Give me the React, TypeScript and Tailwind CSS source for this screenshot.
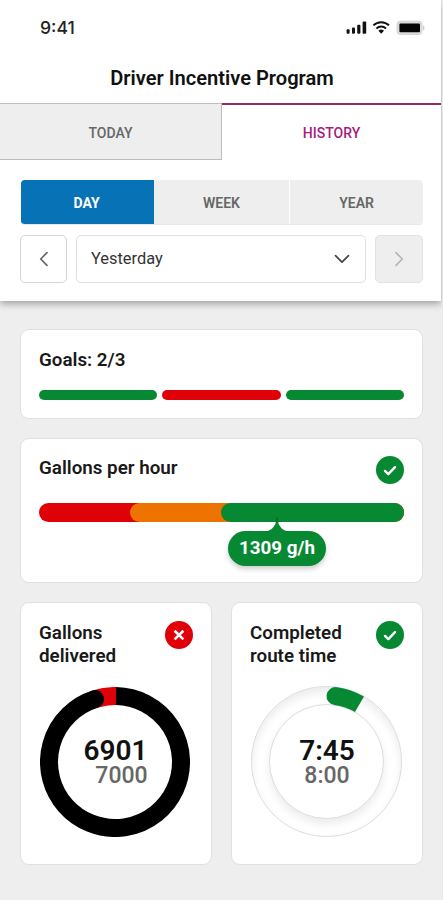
import React from "react";

function StatusIcons() {
  return (
    <svg width="80" height="16" viewBox="0 0 80 16" className="block">
      <g fill="#111">
        <rect x="0.6" y="9.3" width="3" height="4.4" rx="1" />
        <rect x="6" y="7.6" width="3" height="6.1" rx="1" />
        <rect x="11.2" y="4.8" width="3.2" height="8.9" rx="1" />
        <rect x="16.6" y="1.6" width="3.6" height="12.1" rx="1" />
      </g>
      <g fill="none" stroke="#111" strokeWidth="2">
        <path d="M27.4 5.4a11 11 0 0 1 15.6 0" />
        <path d="M30.4 8.6a6.8 6.8 0 0 1 9.6 0" />
      </g>
      <path d="M32.4 10.8a4 4 0 0 1 5.6 0L35.2 13.8z" fill="#111" />
      <rect x="51" y="1.2" width="25" height="13.2" rx="3.4" fill="#ddd" stroke="#d2d2d2" />
      <path d="M77 5.2c1.9.7 1.9 4.4 0 5.2z" fill="#ccc" />
      <rect x="53.4" y="3.6" width="20.6" height="8.6" rx="1" fill="#050505" />
    </svg>
  );
}

function Badge({ ok }: { ok: boolean }) {
  return (
    <svg width="28" height="28" viewBox="0 0 28 28" className="block shrink-0">
      <circle cx="14" cy="14" r="14" fill={ok ? "#078832" : "#df0008"} />
      <path
        d={ok ? "M9 14.9l3.3 3.2 6.7-6.9" : "M9.6 9.8l8.8 8.6M18.4 9.8l-8.8 8.6"}
        fill="none"
        stroke="#fff"
        strokeWidth={ok ? 2.4 : 2.6}
        strokeLinecap={ok ? "round" : "butt"}
        strokeLinejoin="round"
      />
    </svg>
  );
}

function Chevron({ d, w, h, color }: { d: string; w: number; h: number; color: string }) {
  return (
    <svg width={w} height={h} viewBox={`0 0 ${w} ${h}`} className="block">
      <path d={d} fill="none" stroke={color} strokeWidth="1.7" strokeLinecap="round" strokeLinejoin="round" />
    </svg>
  );
}

const card = "rounded-[9px] border border-[#e0e0e0] bg-white";
const heading = "pt-px text-[18.8px] leading-[23px] font-semibold text-[#191919]";

export default function App() {
  return (
    <div className="h-[900px] w-[443px] overflow-hidden border-r border-[#e8e8e8] bg-[#eeeeee] font-['Roboto',sans-serif]">
      <header className="h-[301px] w-[441px] bg-white shadow-[0_3px_7px_rgba(0,0,0,0.32)]">
        <div className="flex h-[56px] items-center justify-between pr-[15px] pl-[40px]">
          <span className="font-['Inter',sans-serif] text-[17.6px] font-medium text-[#222]">9:41</span>
          <StatusIcons />
        </div>
        <h1 className="h-[47px] pl-[3px] text-center text-[20.1px] leading-[44px] font-semibold text-[#111]">
          Driver Incentive Program
        </h1>
        <nav className="flex h-[57px] text-[14px] font-medium">
          <div className="flex w-[222px] items-center justify-center border-t border-r border-b border-[#bdbdbd] bg-[#eee] pt-[3px] text-[#666]">
            TODAY
          </div>
          <div className="flex grow items-center justify-center border-t-2 border-[#982b5c] pt-px text-[#a41c7c]">
            HISTORY
          </div>
        </nav>
        <div className="pt-[20px] pr-[18px] pl-[20px]">
          <div className="ml-px flex h-[45px] overflow-hidden rounded-[4px] border-b border-[#e9e9e9] text-[14px] font-semibold text-[#666]">
            <div className="flex w-[133px] items-center justify-center bg-[#0872b6] pt-[2px] pr-[2px] font-bold text-white">DAY</div>
            <div className="flex w-[135px] items-center justify-center bg-[#eee] pt-[2px]">WEEK</div>
            <div className="ml-px flex grow items-center justify-center bg-[#eee] pt-[2px]">YEAR</div>
          </div>
          <div className="mt-[10px] flex h-[48px] gap-[9px]">
            <button className="flex w-[47px] items-center justify-center rounded-[5px] border border-[#d5d5d5]">
              <Chevron w={10} h={16} d="M8 1.7L1.7 8 8 14.3" color="#666" />
            </button>
            <div className="flex grow items-center justify-between rounded-[5px] border border-[#e0e0e0] pr-[15px] pl-[14px] text-[16.4px] text-[#333]">
              <span className="pt-px">Yesterday</span>
              <Chevron w={16} h={10} d="M1.5 1.7L8 8.2l6.5-6.5" color="#444" />
            </div>
            <button className="flex w-[48px] items-center justify-center rounded-[5px] border border-[#e3e3e3] bg-[#eee]">
              <Chevron w={10} h={16} d="M2 1.7L8.3 8 2 14.3" color="#b5b5b5" />
            </button>
          </div>
        </div>
      </header>

      <main className="flex flex-col gap-[19px] pt-[28px] pr-[19px] pl-[20px]">
        <section className={`${card} h-[90px] px-[18px] pt-[18px]`}>
          <h2 className={heading}>Goals: 2/3</h2>
          <div className="mt-[18px] flex gap-[5px]">
            <div className="h-[10px] grow rounded-full bg-[#078832]" />
            <div className="h-[10px] grow rounded-full bg-[#df0008]" />
            <div className="h-[10px] grow rounded-full bg-[#078832]" />
          </div>
        </section>

        <section className={`${card} h-[145px] px-[18px] pt-[17px]`}>
          <div className="flex h-[47px] justify-between">
            <h2 className={heading}>Gallons per hour</h2>
            <Badge ok />
          </div>
          <div className="relative">
            <div className="flex h-[19px] overflow-hidden rounded-full bg-[#df0008]">
              <div className="ml-[91px] flex grow rounded-l-full bg-[#ed7200]">
                <div className="ml-[91px] grow rounded-l-full bg-[#078832]" />
              </div>
            </div>
            <div className="absolute top-[28px] left-[189px] flex h-[35px] w-[98px] items-center justify-center rounded-full bg-[#078832] text-[18.8px] font-bold text-white shadow-[0_3px_5px_rgba(0,0,0,0.2)]">
              <svg width="36" height="16" viewBox="0 0 36 16" className="absolute -top-[15px] left-[31px]">
                <path d="M4 16C12 15 16 11 17.3 5Q18 0 18.7 5C20 11 24 15 32 16z" fill="#078832" />
                <path d="M16.9 6.5Q17.8 1.5 18 1.5T19.1 6.5" fill="none" stroke="#056525" strokeWidth="0.8" />
              </svg>
              <span>1309 g/h</span>
            </div>
          </div>
        </section>

        <div className="flex gap-[19px]">
          <section className={`${card} h-[263px] w-[192px] px-[18px] pt-[18px]`}>
            <div className="flex h-[66px] justify-between">
              <h2 className={heading}>Gallons<br />delivered</h2>
              <Badge ok={false} />
            </div>
            <div className="relative ml-px h-[150px] w-[150px]">
              <svg width="150" height="150" viewBox="0 0 150 150" className="block">
                <g fill="none" strokeWidth="18">
                  <path d="M55 12.1A66 66 0 0 1 76.5 9" stroke="#df0008" />
                  <path d="M76 9A66 66 0 1 1 55 12.1" stroke="#000" />
                  <path d="M55 12.1L55.1 12.07" stroke="#000" strokeLinecap="round" />
                </g>
              </svg>
              <div className="absolute inset-0 pt-[50px] pl-px text-center font-medium">
                <div className="text-[28px] leading-[28px] font-semibold text-[#111]">6901</div>
                <div className="pl-[12px] text-[23px] leading-[22px] text-[#666]">7000</div>
              </div>
            </div>
          </section>

          <section className={`${card} h-[263px] w-[192px] px-[18px] pt-[18px]`}>
            <div className="flex h-[65px] justify-between">
              <h2 className={heading}>Completed<br />route time</h2>
              <Badge ok />
            </div>
            <div className="relative ml-px h-[151px] w-[151px] rounded-full border border-[#ddd] p-[17px] shadow-[inset_0_5px_9px_rgba(0,0,0,0.08)]">
              <div className="h-[115px] w-[115px] rounded-full border border-[#ddd] bg-white shadow-[0_5px_9px_rgba(0,0,0,0.08)]" />
              <svg width="151" height="151" viewBox="0 0 151 151" className="absolute -top-px -left-px">
                <g fill="none" stroke="#078832" strokeWidth="18">
                  <path d="M84.5 10.1A66 66 0 0 1 108.5 18.3" />
                  <path d="M84.5 10.1L84.6 10.11" strokeLinecap="round" />
                </g>
              </svg>
              <div className="absolute inset-0 pt-[50px] pl-px text-center font-medium">
                <div className="text-[28px] leading-[28px] font-semibold text-[#111]">7:45</div>
                <div className="text-[23px] leading-[22px] text-[#666]">8:00</div>
              </div>
            </div>
          </section>
        </div>
      </main>
    </div>
  );
}
